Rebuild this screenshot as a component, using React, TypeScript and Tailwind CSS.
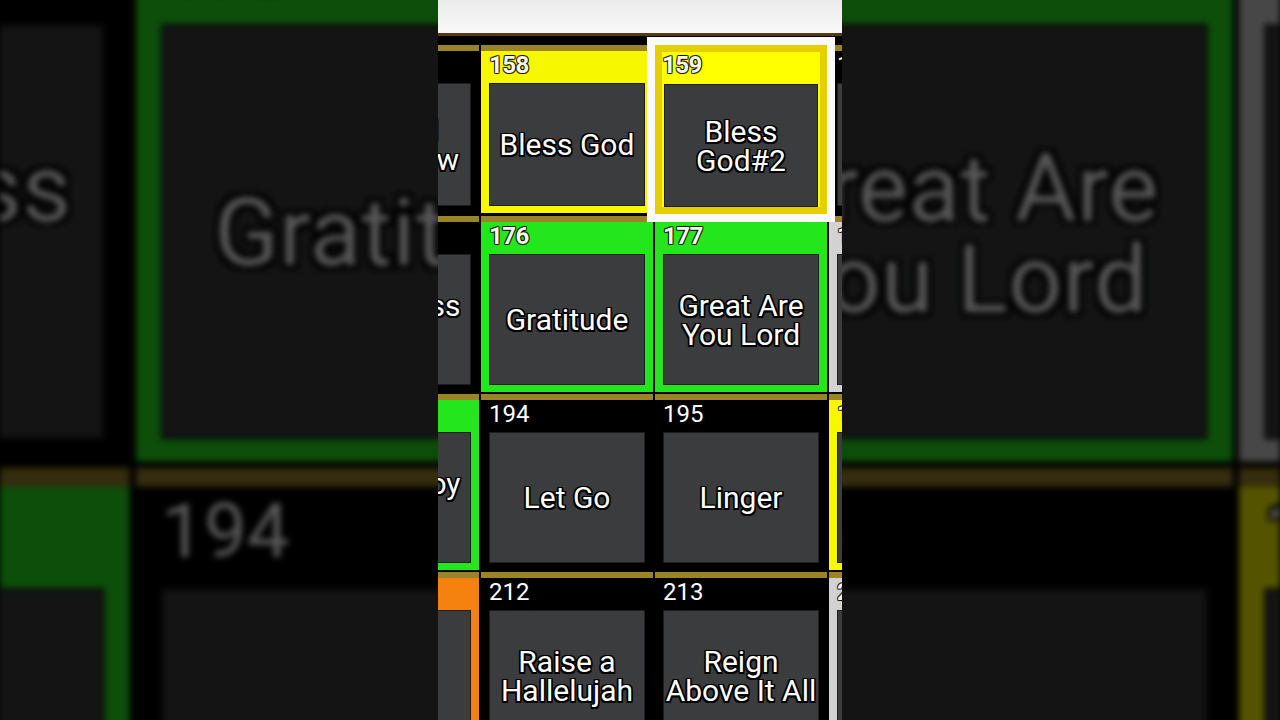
type Tone = 'black' | 'yellow' | 'green' | 'orange' | 'gray';

type Cell = {
  n: number;
  lines: string[];
  tone: Tone;
  selected?: boolean;
};

const frameBg: Record<Tone, string> = {
  black: 'bg-black',
  yellow: 'bg-[#f7f700]',
  green: 'bg-[#24e61c]',
  orange: 'bg-[#f5820f]',
  gray: 'bg-[#d2d2d2]',
};

const rows: Cell[][] = [
  [
    { n: 157, lines: ['Be Still', 'and Know'], tone: 'black' },
    { n: 158, lines: ['Bless God'], tone: 'yellow' },
    { n: 159, lines: ['Bless', 'God#2'], tone: 'yellow', selected: true },
    { n: 160, lines: ['Blessed'], tone: 'black' },
  ],
  [
    { n: 175, lines: ['Goodness', 'of God'], tone: 'black' },
    { n: 176, lines: ['Gratitude'], tone: 'green' },
    { n: 177, lines: ['Great Are', 'You Lord'], tone: 'green' },
    { n: 178, lines: ['Great I Am'], tone: 'gray' },
  ],
  [
    { n: 193, lines: ['Jesus Joy', 'in Me'], tone: 'green' },
    { n: 194, lines: ['Let Go'], tone: 'black' },
    { n: 195, lines: ['Linger'], tone: 'black' },
    { n: 196, lines: ['Living', 'Hope'], tone: 'yellow' },
  ],
  [
    { n: 211, lines: ['Praise'], tone: 'orange' },
    { n: 212, lines: ['Raise a', 'Hallelujah'], tone: 'black' },
    { n: 213, lines: ['Reign', 'Above It All'], tone: 'black' },
    { n: 214, lines: ['Rest'], tone: 'gray' },
  ],
];

// outline used on song titles
const titleOutline =
  '[text-shadow:-1.5px_-1.5px_0_#000,1.5px_-1.5px_0_#000,-1.5px_1.5px_0_#000,1.5px_1.5px_0_#000,0_1.5px_0_#000,0_-1.5px_0_#000,1.5px_0_0_#000,-1.5px_0_0_#000]';

// thin outline for numbers sitting on a coloured header
const numberOutline =
  '[text-shadow:-1px_-1px_0_#00000099,1px_-1px_0_#00000099,-1px_1px_0_#00000099,1px_1px_0_#00000099,0_1px_0_#00000099,0_-1px_0_#00000099,1px_0_0_#00000099,-1px_0_0_#00000099]';

function Title({ lines }: { lines: string[] }) {
  return (
    <div className={`text-center text-white text-[30px] leading-[29px] whitespace-nowrap ${titleOutline}`}>
      {lines.map((l) => (
        <div key={l}>{l}</div>
      ))}
    </div>
  );
}

function Tile({ cell, boxH }: { cell: Cell; boxH: string }) {
  const plain = cell.tone === 'black';
  const numCls = plain ? 'text-white' : `text-[#f8f8f0] font-bold tracking-[-0.5px] ${numberOutline}`;

  if (cell.selected) {
    return (
      <div className="relative z-10 w-[172px] shrink-0 outline-8 outline-[#fafafa] border-[7px] border-[#e6cf00] bg-[#ffff00] flex flex-col">
        <div className={`h-[32px] text-[24px] leading-[24px] pt-[1px] ${numCls}`}>{cell.n}</div>
        <div className={`${boxH} mx-[2px] bg-[#3b3c3d] border border-[#1c1c10] flex items-center justify-center overflow-hidden`}>
          <Title lines={cell.lines} />
        </div>
      </div>
    );
  }

  return (
    <div className="w-[172px] shrink-0 flex flex-col">
      <div className="h-[6px] bg-[#9b8428]" />
      <div className={`${frameBg[cell.tone]} px-[8px] pb-[7px]`}>
        <div className={`h-[32px] text-[24px] leading-[26px] pt-[1px] ${numCls}`}>{cell.n}</div>
        <div className={`${boxH} bg-[#3b3c3d] border border-[#1e1e1e] flex items-center justify-center overflow-hidden`}>
          <Title lines={cell.lines} />
        </div>
      </div>
    </div>
  );
}

function Grid() {
  return (
    <div className="w-[404px] h-[720px] overflow-hidden bg-black flex flex-col [font-family:Roboto,'Noto_Sans',sans-serif]">
      <div className="h-[33px] shrink-0 bg-gradient-to-b from-[#ebebeb] to-[#f8f8f8]" />
      <div className="h-[3px] shrink-0 bg-[#553a16]" />
      <div className="flex flex-col gap-[2px] pt-[9px] -ml-[131px]">
        {rows.map((row, i) => (
          <div key={i} className="flex gap-[2px]">
            {row.map((c) => (
              <Tile key={c.n} cell={c} boxH={i === 0 ? 'h-[123px]' : 'h-[131px]'} />
            ))}
          </div>
        ))}
      </div>
    </div>
  );
}

export default function App() {
  return (
    <div className="relative w-full h-[720px] overflow-hidden bg-black">
      {/* blurred, darkened backdrop of the same grid */}
      <div className="absolute inset-0 flex justify-center pointer-events-none">
        <div className="scale-[3.17] brightness-[.34] blur-[1px]">
          <Grid />
        </div>
      </div>

      <div className="relative mx-auto w-[404px]">
        <Grid />
      </div>
    </div>
  );
}
